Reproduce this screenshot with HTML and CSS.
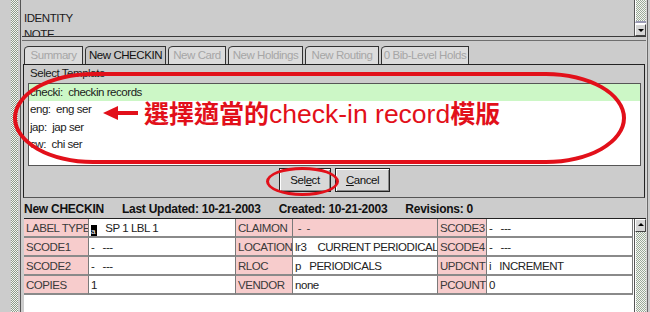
FILE: index.html
```html
<!DOCTYPE html>
<html lang="en">
<head>
    <meta charset="UTF-8">
    <title>New CHECKIN</title>
    <link rel="stylesheet" href="styles.css">
</head>
<body>

    <div class="window">
        <!-- Left frame rail -->
        <div class="rail">
            <div class="rail-gap"></div>
            <div class="dots"></div>
            <div class="rail-line"></div>
        </div>

        <div class="main">
            <!-- Record fields list (scrolled) -->
            <div class="record-pane">
                <div class="record-list">
                    <div class="record-row">IDENTITY</div>
                    <div class="record-row">NOTE</div>
                </div>
                <div class="vscroll small">
                    <div class="track"></div>
                    <div class="arrow-btn down"></div>
                </div>
            </div>

            <!-- Tabs -->
            <div class="tab-area">
                <div class="tabs">
                    <div class="tab off w-summary">Summary</div>
                    <div class="tab on w-checkin">New CHECKIN</div>
                    <div class="tab off w-card">New Card</div>
                    <div class="tab off w-holdings">New Holdings</div>
                    <div class="tab off w-routing">New Routing</div>
                    <div class="tab off w-bib">0 Bib-Level Holds</div>
                </div>

                <div class="tab-body">
                    <div class="group-title">Select Template</div>
                    <div class="template-list">
                        <div class="template-row selected">checki:&nbsp; checkin records</div>
                        <div class="template-row">eng:&nbsp; eng ser</div>
                        <div class="template-row">jap:&nbsp; jap ser</div>
                        <div class="template-row">cw:&nbsp; chi ser</div>
                    </div>
                    <div class="button-row">
                        <button class="btn w-select">Sel<u>e</u>ct</button>
                        <button class="btn w-cancel"><u>C</u>ancel</button>
                    </div>
                </div>
            </div>

            <!-- Record summary -->
            <div class="summary">
                <div class="summary-head">
                    <span>New CHECKIN</span>
                    <span>Last Updated: 10-21-2003</span>
                    <span>Created: 10-21-2003</span>
                    <span>Revisions: 0</span>
                </div>
                <div class="field-pane">
                    <div class="field-grid">
                        <div class="cell label">LABEL TYPE</div>
                        <div class="cell"><span class="caret">a</span>&nbsp;&nbsp; SP 1 LBL 1</div>
                        <div class="cell label">CLAIMON</div>
                        <div class="cell label">&nbsp;-&nbsp; -</div>
                        <div class="cell label">SCODE3</div>
                        <div class="cell">-&nbsp;&nbsp; ---</div>

                        <div class="cell label">SCODE1</div>
                        <div class="cell">-&nbsp;&nbsp; ---</div>
                        <div class="cell label">LOCATION</div>
                        <div class="cell">lr3&nbsp;&nbsp;&nbsp; CURRENT PERIODICALS</div>
                        <div class="cell label">SCODE4</div>
                        <div class="cell">-&nbsp;&nbsp; ---</div>

                        <div class="cell label">SCODE2</div>
                        <div class="cell">-&nbsp;&nbsp; ---</div>
                        <div class="cell label">RLOC</div>
                        <div class="cell">p&nbsp;&nbsp; PERIODICALS</div>
                        <div class="cell label">UPDCNT</div>
                        <div class="cell">i&nbsp;&nbsp; INCREMENT</div>

                        <div class="cell label">COPIES</div>
                        <div class="cell">1</div>
                        <div class="cell label">VENDOR</div>
                        <div class="cell">none</div>
                        <div class="cell label">PCOUNT</div>
                        <div class="cell">0</div>
                    </div>
                    <div class="vscroll">
                        <div class="arrow-btn up"></div>
                        <div class="track"></div>
                    </div>
                </div>
            </div>
        </div>

        <div class="edge"></div>

        <!-- Red annotation drawn over the dialog -->
        <div class="mark-oval"></div>
        <div class="mark-select"></div>
        <div class="mark-note">
            <svg width="36" height="16" viewBox="0 0 36 16">
                <polygon points="0,8 15,1 15,15" fill="#e2101a"/>
                <rect x="14" y="6" width="21" height="4" fill="#e2101a"/>
            </svg>
            <span class="note-text">選擇適當的<span class="latin">check-in record</span>模版</span>
        </div>
    </div>

</body>
</html>
```

FILE: styles.css
```css
body {
    margin: 0;
    background-color: #cccccc;
    font-family: "Liberation Sans", Arial, sans-serif;
    font-size: 11.5px;
    letter-spacing: -0.45px;
    color: #1a1a1a;
}
.window {
    position: relative;
    display: flex;
    width: 650px;
    height: 312px;
    overflow: hidden;
}

/* left rail */
.rail {
    display: flex;
    width: 22px;
}
.rail-gap {
    width: 11px;
}
.dots {
    width: 7px;
    background: repeating-conic-gradient(#f4f8f0 0 25%, #8c9a8c 0 50%) 0 0 / 2px 2px;
}
.rail-line {
    width: 1px;
    margin-left: 2px;
    background-color: #555;
}

.main {
    display: flex;
    flex-direction: column;
    width: 624px;
}
.edge {
    width: 4px;
    border-left: 1px solid #d6d6d6;
    box-sizing: border-box;
    position: relative;
}
.edge::after {
    content: "";
    position: absolute;
    left: 0;
    top: 0;
    bottom: 0;
    width: 1px;
    background-color: #6a6a6a;
}

/* top record pane */
.record-pane {
    display: flex;
    height: 36px;
    border-bottom: 1px solid #3a3a3a;
    overflow: hidden;
}
.record-list {
    flex: 1;
    padding: 10px 0 0 2px;
}
.record-row {
    height: 16px;
    line-height: 16px;
}
.vscroll {
    display: flex;
    flex-direction: column;
    width: 11px;
    border-left: 1px solid #555;
    background-color: #fff;
}
.vscroll .track {
    flex: 1;
    background: repeating-conic-gradient(#f4f8f0 0 25%, #9aa89a 0 50%) 0 0 / 2px 2px;
    border-left: 1px solid #fff;
}
.vscroll.small .track {
    flex: none;
    height: 21px;
    border-bottom: 2px solid #9a9ab4;
}
.arrow-btn {
    height: 11px;
    background-color: #d6d6d6;
    border: 1px solid #444;
    border-top-color: #fff;
    border-left-color: #fff;
    position: relative;
}
.arrow-btn::after {
    content: "";
    position: absolute;
    left: 2px;
    top: 4px;
    border-left: 3px solid transparent;
    border-right: 3px solid transparent;
}
.arrow-btn.down::after {
    border-top: 3px solid #000;
}
.arrow-btn.up::after {
    top: 3px;
    border-bottom: 3px solid #000;
}
.vscroll.small .arrow-btn {
    margin-top: 1px;
}

/* tabs */
.tab-area {
    margin-top: 3px;
    border-top: 1px solid #6e6e6e;
}
.tabs {
    display: flex;
    gap: 2px;
    margin-top: 5px;
    padding-left: 2px;
    height: 18px;
}
.tab {
    box-sizing: border-box;
    height: 18px;
    line-height: 17px;
    text-align: center;
    border: 1px solid #333;
    border-bottom: none;
    border-top-left-radius: 5px 4px;
}
.tab.off {
    background-color: #dcdcdc;
    color: #a6a6a6;
}
.tab.on {
    background-color: #c6c6c6;
    color: #111;
}
.w-summary { width: 59px; }
.w-checkin { width: 81px; }
.w-card { width: 58px; }
.w-holdings { width: 75px; }
.w-routing { width: 74px; }
.w-bib { width: 88px; }

.tab-body {
    margin: 0 1px;
    height: 134px;
    border: 1px solid #222;
    border-bottom-color: #555;
    padding: 0 3px 0 4px;
    box-sizing: border-box;
}
.group-title {
    height: 18px;
    line-height: 17px;
    padding-left: 2px;
}
.template-list {
    height: 83px;
    box-sizing: border-box;
    border: 1px solid #555;
    background-color: #fff;
}
.template-row {
    height: 17.4px;
    line-height: 17px;
    padding-left: 1px;
}
.template-row.selected {
    background-color: #ccf7c6;
}
.button-row {
    display: flex;
    justify-content: center;
    gap: 4px;
    margin-top: 2px;
}
.btn {
    height: 24px;
    padding: 0;
    font: inherit;
    letter-spacing: inherit;
    color: #111;
    background-color: #d8d8d8;
    border: 1px solid #222;
    box-shadow: inset 1px 1px 0 #fff, inset -1px -1px 0 #8a8a8a;
}
.w-select { width: 52px; }
.w-cancel { width: 55px; }

/* summary */
.summary {
    flex: 1;
    display: flex;
    flex-direction: column;
}
.summary-head {
    display: flex;
    gap: 18px;
    height: 20px;
    line-height: 22px;
    padding-left: 2px;
    font-size: 12px;
    font-weight: bold;
    letter-spacing: -0.25px;
    color: #111;
}
.field-pane {
    flex: 1;
    display: flex;
    margin-left: 2px;
    border-top: 1px solid #222;
    background-color: #fff;
}
.field-grid {
    flex: 1;
    display: grid;
    grid-template-columns: 65px 147px 57px 145px 49px 146px;
    grid-auto-rows: 19px;
    align-content: start;
}
.cell {
    box-sizing: border-box;
    border-right: 1px solid #7a7a7a;
    border-bottom: 2px solid #8a8a8a;
    padding-left: 2px;
    line-height: 18px;
    white-space: nowrap;
    overflow: hidden;
    color: #222;
}
.cell.label {
    background-color: #f7cccc;
    color: #3a3a3a;
}
.caret {
    display: inline-block;
    width: 6px;
    height: 13px;
    line-height: 13px;
    background-color: #000;
    color: #fff;
    font-size: 8px;
    vertical-align: -2px;
}

/* red annotation */
.mark-oval {
    position: absolute;
    left: 13px;
    top: 72px;
    width: 613px;
    height: 92px;
    box-sizing: border-box;
    border: 4px solid #e2101a;
    border-radius: 80px / 46px;
}
.mark-select {
    position: absolute;
    left: 266px;
    top: 167px;
    width: 73px;
    height: 29px;
    box-sizing: border-box;
    border: 3px solid #e2101a;
    border-radius: 50%;
}
.mark-note {
    position: absolute;
    left: 103px;
    top: 96px;
    display: flex;
    align-items: center;
    gap: 5px;
    color: #e2101a;
    letter-spacing: 0;
}
.note-text {
    font-family: "Noto Sans CJK TC", sans-serif;
    font-weight: bold;
    font-size: 25px;
    line-height: 32px;
}
.note-text .latin {
    font-family: "Liberation Sans", Arial, sans-serif;
    font-weight: normal;
    font-size: 26.5px;
}
```
